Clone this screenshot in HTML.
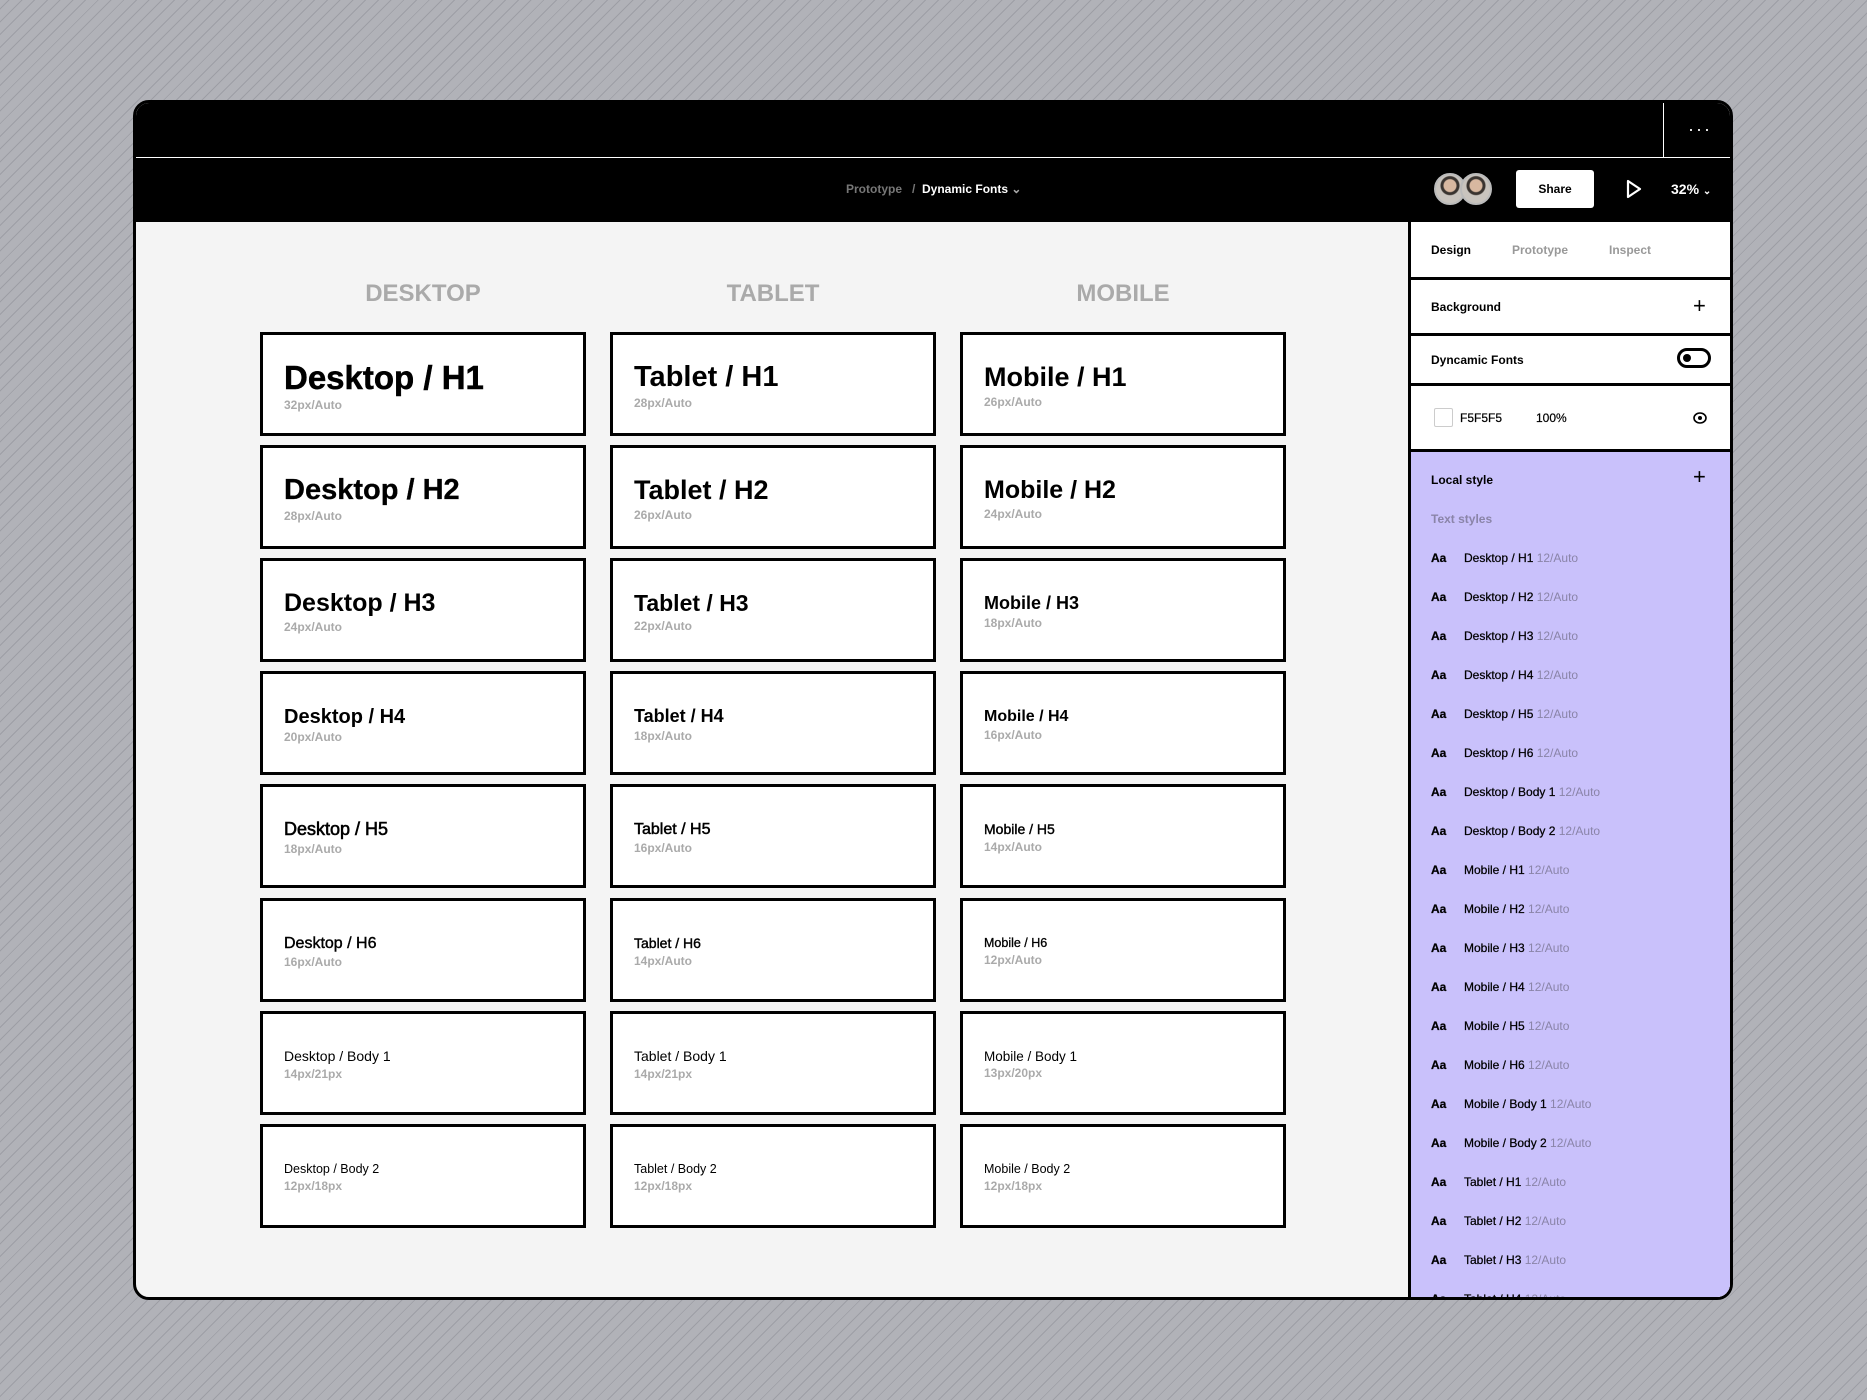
<!DOCTYPE html>
<html><head><meta charset="utf-8"><style>
*{margin:0;padding:0;box-sizing:border-box}
body{width:1867px;height:1400px;overflow:hidden;font-family:"Liberation Sans",sans-serif;background:#b1b2b8;
background-image:repeating-linear-gradient(135deg,#b1b2b8 0 6px,#9d9ea5 6px 7px,#b1b2b8 7px 9px);position:relative}
.win{position:absolute;left:133px;top:100px;width:1600px;height:1200px;background:#f4f4f4;border:3px solid #000;border-radius:16px;overflow:hidden}
.top{position:absolute;left:0;top:0;width:100%;height:55px;background:#000;border-bottom:1px solid #fff}
.vl{position:absolute;left:1527px;top:0;width:1px;height:55px;background:#fff}
.dots{position:absolute;left:1552px;top:16px;color:#fff;font-size:18px;letter-spacing:2px}
.bar{position:absolute;left:0;top:55px;width:100%;height:64px;background:#000}
.crumb{position:absolute;left:710px;top:24px;font-size:12px;color:#777;font-weight:bold}
.crumb b{color:#fff}
.av{position:absolute;top:15px;width:32px;height:32px;border-radius:50%;border:2px solid #bbb;background:radial-gradient(circle at 50% 38%,#d8b8a0 0 6px,#3a3430 7px 9px,#c9c4be 10px)}
.share{position:absolute;left:1380px;top:12px;width:78px;height:38px;background:#fff;border-radius:3px;font-size:12px;text-align:center;line-height:38px;font-weight:bold}
.zoom{position:absolute;left:1535px;top:23px;color:#fff;font-size:14px;font-weight:bold}
.col{position:absolute;top:177px;width:326px;text-align:center;font-size:24px;font-weight:bold;color:#aaa}
.card{position:absolute;width:326px;height:104px;background:#fff;border:3px solid #000;display:flex;flex-direction:column;justify-content:center;padding-left:21px;padding-top:4px}
.card .t{color:#000;line-height:1.1}
.card .s{color:#aaa;font-size:12px;font-weight:bold;margin-top:2px}
.side{position:absolute;left:1272px;top:119px;width:325px;height:1080px;background:#fff;border-left:3px solid #000}
.row{position:absolute;left:0;width:100%;border-bottom:3px solid #000;font-size:12px;font-weight:bold}
.lbl{position:absolute;left:20px}
.purple{position:absolute;left:0;top:230px;width:100%;height:860px;background:#c9c1fb}
.it{position:absolute;left:20px;font-size:12px;-webkit-text-stroke:.25px #000;white-space:nowrap}
.it .a{font-weight:bold;display:inline-block;width:33px}
.it .g{color:#8a84a8;-webkit-text-stroke:0}
</style></head><body>
<div class="win">
<div class="top"><div class="vl"></div><div class="dots">···</div></div>
<div class="bar">
<div class="crumb">Prototype &nbsp; / &nbsp;<b>Dynamic Fonts</b> <span style="color:#aaa">⌄</span></div>
<div class="av" style="left:1298px"></div><div class="av" style="left:1324px"></div>
<div class="share">Share</div>
<svg style="position:absolute;left:1488px;top:20px" width="20" height="22" viewBox="0 0 20 22"><path d="M4 3 L16 11 L4 19 Z" fill="none" stroke="#fff" stroke-width="2.2" stroke-linejoin="round"/></svg>
<div class="zoom">32% <span style="font-size:10px">⌄</span></div>
</div>

<div class="col" style="left:124px">DESKTOP</div>
<div class="col" style="left:474px">TABLET</div>
<div class="col" style="left:824px">MOBILE</div>

<div class="card" style="left:124px;top:229px"><div class="t" style="font-size:33px;font-weight:bold;-webkit-text-stroke:.5px #000">Desktop / H1</div><div class="s">32px/Auto</div></div>
<div class="card" style="left:124px;top:342px"><div class="t" style="font-size:29px;font-weight:bold;-webkit-text-stroke:.3px #000">Desktop / H2</div><div class="s">28px/Auto</div></div>
<div class="card" style="left:124px;top:455px"><div class="t" style="font-size:25px;font-weight:bold">Desktop / H3</div><div class="s">24px/Auto</div></div>
<div class="card" style="left:124px;top:568px"><div class="t" style="font-size:20px;font-weight:bold">Desktop / H4</div><div class="s">20px/Auto</div></div>
<div class="card" style="left:124px;top:681px"><div class="t" style="font-size:18px;-webkit-text-stroke:.6px #000">Desktop / H5</div><div class="s">18px/Auto</div></div>
<div class="card" style="left:124px;top:795px"><div class="t" style="font-size:16px;-webkit-text-stroke:.4px #000">Desktop / H6</div><div class="s">16px/Auto</div></div>
<div class="card" style="left:124px;top:908px"><div class="t" style="font-size:14px">Desktop / Body 1</div><div class="s">14px/21px</div></div>
<div class="card" style="left:124px;top:1021px"><div class="t" style="font-size:12.5px">Desktop / Body 2</div><div class="s">12px/18px</div></div>

<div class="card" style="left:474px;top:229px"><div class="t" style="font-size:29px;font-weight:bold">Tablet / H1</div><div class="s">28px/Auto</div></div>
<div class="card" style="left:474px;top:342px"><div class="t" style="font-size:27px;font-weight:bold">Tablet / H2</div><div class="s">26px/Auto</div></div>
<div class="card" style="left:474px;top:455px"><div class="t" style="font-size:23px;font-weight:bold">Tablet / H3</div><div class="s">22px/Auto</div></div>
<div class="card" style="left:474px;top:568px"><div class="t" style="font-size:18px;font-weight:bold">Tablet / H4</div><div class="s">18px/Auto</div></div>
<div class="card" style="left:474px;top:681px"><div class="t" style="font-size:16px;-webkit-text-stroke:.5px #000">Tablet / H5</div><div class="s">16px/Auto</div></div>
<div class="card" style="left:474px;top:795px"><div class="t" style="font-size:14px;-webkit-text-stroke:.4px #000">Tablet / H6</div><div class="s">14px/Auto</div></div>
<div class="card" style="left:474px;top:908px"><div class="t" style="font-size:14px">Tablet / Body 1</div><div class="s">14px/21px</div></div>
<div class="card" style="left:474px;top:1021px"><div class="t" style="font-size:12.5px">Tablet / Body 2</div><div class="s">12px/18px</div></div>

<div class="card" style="left:824px;top:229px"><div class="t" style="font-size:27px;font-weight:bold">Mobile / H1</div><div class="s">26px/Auto</div></div>
<div class="card" style="left:824px;top:342px"><div class="t" style="font-size:25px;font-weight:bold">Mobile / H2</div><div class="s">24px/Auto</div></div>
<div class="card" style="left:824px;top:455px"><div class="t" style="font-size:18px;font-weight:bold">Mobile / H3</div><div class="s">18px/Auto</div></div>
<div class="card" style="left:824px;top:568px"><div class="t" style="font-size:16px;font-weight:bold">Mobile / H4</div><div class="s">16px/Auto</div></div>
<div class="card" style="left:824px;top:681px"><div class="t" style="font-size:14px;-webkit-text-stroke:.4px #000">Mobile / H5</div><div class="s">14px/Auto</div></div>
<div class="card" style="left:824px;top:795px"><div class="t" style="font-size:12.5px;-webkit-text-stroke:.3px #000">Mobile / H6</div><div class="s">12px/Auto</div></div>
<div class="card" style="left:824px;top:908px"><div class="t" style="font-size:13.5px">Mobile / Body 1</div><div class="s">13px/20px</div></div>
<div class="card" style="left:824px;top:1021px"><div class="t" style="font-size:12.5px">Mobile / Body 2</div><div class="s">12px/18px</div></div>

<div class="side">
<div class="row" style="top:0;height:58px"><span class="lbl" style="top:21px">Design</span><span class="lbl" style="left:101px;top:21px;color:#999">Prototype</span><span class="lbl" style="left:198px;top:21px;color:#999">Inspect</span></div>
<div class="row" style="top:58px;height:56px"><span class="lbl" style="top:20px">Background</span><span style="position:absolute;left:282px;top:13px;font-size:22px;font-weight:normal">+</span></div>
<div class="row" style="top:114px;height:50px"><span class="lbl" style="top:17px">Dyncamic Fonts</span>
<div style="position:absolute;left:266px;top:12px;width:34px;height:20px;border:3px solid #000;border-radius:10px"><div style="position:absolute;left:3px;top:3px;width:8px;height:8px;border-radius:50%;background:#000"></div></div></div>
<div class="row" style="top:164px;height:66px;font-weight:normal"><div style="position:absolute;left:23px;top:22px;width:19px;height:19px;border:1px solid #ccc;border-radius:2px"></div><span class="lbl" style="left:49px;top:25px;-webkit-text-stroke:.2px #000">F5F5F5</span><span class="lbl" style="left:125px;top:25px;-webkit-text-stroke:.2px #000">100%</span>
<svg style="position:absolute;left:281px;top:25px" width="16" height="14" viewBox="0 0 16 14"><ellipse cx="8" cy="7" rx="6" ry="5" fill="none" stroke="#000" stroke-width="1.6"/><circle cx="8" cy="7" r="2" fill="#000"/></svg></div>
<div class="purple">
<span class="lbl" style="top:21px;font-size:12px;font-weight:bold">Local style</span><span style="position:absolute;left:282px;top:12px;font-size:22px">+</span>
<span class="lbl" style="top:60px;font-size:12px;font-weight:bold;color:#8a84a8">Text styles</span>
<div class="it" style="top:99px"><span class="a">Aa</span>Desktop / H1 <span class="g">12/Auto</span></div>
<div class="it" style="top:138px"><span class="a">Aa</span>Desktop / H2 <span class="g">12/Auto</span></div>
<div class="it" style="top:177px"><span class="a">Aa</span>Desktop / H3 <span class="g">12/Auto</span></div>
<div class="it" style="top:216px"><span class="a">Aa</span>Desktop / H4 <span class="g">12/Auto</span></div>
<div class="it" style="top:255px"><span class="a">Aa</span>Desktop / H5 <span class="g">12/Auto</span></div>
<div class="it" style="top:294px"><span class="a">Aa</span>Desktop / H6 <span class="g">12/Auto</span></div>
<div class="it" style="top:333px"><span class="a">Aa</span>Desktop / Body 1 <span class="g">12/Auto</span></div>
<div class="it" style="top:372px"><span class="a">Aa</span>Desktop / Body 2 <span class="g">12/Auto</span></div>
<div class="it" style="top:411px"><span class="a">Aa</span>Mobile / H1 <span class="g">12/Auto</span></div>
<div class="it" style="top:450px"><span class="a">Aa</span>Mobile / H2 <span class="g">12/Auto</span></div>
<div class="it" style="top:489px"><span class="a">Aa</span>Mobile / H3 <span class="g">12/Auto</span></div>
<div class="it" style="top:528px"><span class="a">Aa</span>Mobile / H4 <span class="g">12/Auto</span></div>
<div class="it" style="top:567px"><span class="a">Aa</span>Mobile / H5 <span class="g">12/Auto</span></div>
<div class="it" style="top:606px"><span class="a">Aa</span>Mobile / H6 <span class="g">12/Auto</span></div>
<div class="it" style="top:645px"><span class="a">Aa</span>Mobile / Body 1 <span class="g">12/Auto</span></div>
<div class="it" style="top:684px"><span class="a">Aa</span>Mobile / Body 2 <span class="g">12/Auto</span></div>
<div class="it" style="top:723px"><span class="a">Aa</span>Tablet / H1 <span class="g">12/Auto</span></div>
<div class="it" style="top:762px"><span class="a">Aa</span>Tablet / H2 <span class="g">12/Auto</span></div>
<div class="it" style="top:801px"><span class="a">Aa</span>Tablet / H3 <span class="g">12/Auto</span></div>
<div class="it" style="top:840px"><span class="a">Aa</span>Tablet / H4 <span class="g">12/Auto</span></div>
</div>
</div>
</div>
</body></html>
